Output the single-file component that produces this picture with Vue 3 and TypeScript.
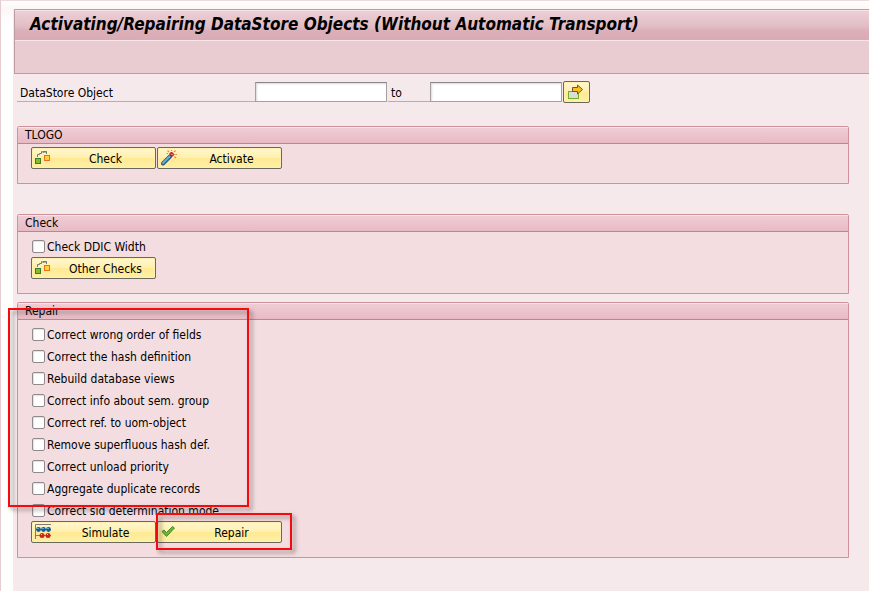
<script setup lang="ts">
import { reactive, ref } from 'vue'

interface Option {
  id: string
  label: string
  checked: boolean
}

const rangeFrom = ref('')
const rangeTo = ref('')
const ddicWidth = ref(false)

const repairs = reactive<Option[]>([
  { id: 'order', label: 'Correct wrong order of fields', checked: false },
  { id: 'hash', label: 'Correct the hash definition', checked: false },
  { id: 'views', label: 'Rebuild database views', checked: false },
  { id: 'sem', label: 'Correct info about sem. group', checked: false },
  { id: 'uom', label: 'Correct ref. to uom-object', checked: false },
  { id: 'superfluous', label: 'Remove superfluous hash def.', checked: false },
  { id: 'unload', label: 'Correct unload priority', checked: false },
  { id: 'duplicates', label: 'Aggregate duplicate records', checked: false },
  { id: 'sid', label: 'Correct sid determination mode', checked: false },
])
</script>

<template>
  <div class="frame">
    <main class="screen">
      <header class="titlebar">
        <h1>Activating/Repairing DataStore Objects (Without Automatic Transport)</h1>
        <div class="toolbar"></div>
      </header>

      <form class="content" @submit.prevent>
        <div class="selection">
          <label class="caption from" for="range-from">DataStore Object</label>
          <input id="range-from" v-model="rangeFrom" class="field" type="text" />
          <label class="caption to" for="range-to">to</label>
          <input id="range-to" v-model="rangeTo" class="field" type="text" />
          <button class="more" type="button" aria-label="Multiple selection">
            <svg width="16" height="16" viewBox="0 0 16 16">
              <rect x="0.5" y="7.5" width="10" height="7" fill="#dcdcdc" stroke="#72b026" />
              <path d="M4.500 3.500v4h5v2.500l5-4.500-5-4.500v2.500z" fill="#fdbf13" stroke="#66583a" />
            </svg>
          </button>
        </div>

        <section class="group tlogo">
          <h2>TLOGO</h2>
          <div class="body">
            <div class="actions">
              <button class="action" type="button">
                <svg width="16" height="16" viewBox="0 0 16 16">
                  <path d="M2.500 7V4.500H4.500V3.500H6.500V1.500L9 2.500M8 1.500H11.500V4M9.500 3L11.500 1" fill="none" stroke="#73777f" />
                  <rect x="0.5" y="8.5" width="5" height="5" fill="#8abb22" stroke="#32803c" />
                  <rect x="9.5" y="5.5" width="5" height="5" fill="#ffd42b" stroke="#ed6d23" />
                </svg>
                <span>Check</span>
              </button>
              <button class="action" type="button">
                <svg width="16" height="16" viewBox="0 0 16 16">
                  <path d="M2 13.500L9 6.500" stroke="#315e7c" stroke-width="4" stroke-linecap="round" />
                  <path d="M2 13L8.500 6.500" stroke="#65acd2" stroke-width="2" stroke-linecap="round" />
                  <path d="M8.500 4l2-2 2.500 2.500-2 2z" fill="#d91c25" stroke="#a32026" />
                  <path d="M10.300 3.800l1 1" stroke="#fff" />
                  <path d="M6.500 .500l1.500 1.500M10.500 0v1M14.500 .500L13 2M14.500 4.500H16M13.500 6.500l1.500 1.500M5.500 3.500H7" stroke="#f58a13" stroke-width="1.200" />
                </svg>
                <span>Activate</span>
              </button>
            </div>
          </div>
        </section>

        <section class="group check">
          <h2>Check</h2>
          <div class="body">
            <label class="option" for="ddic">
              <input id="ddic" v-model="ddicWidth" type="checkbox" /><span>Check DDIC Width</span>
            </label>
            <div class="actions">
              <button class="action" type="button">
                <svg width="16" height="16" viewBox="0 0 16 16">
                  <path d="M2.500 7V4.500H4.500V3.500H6.500V1.500L9 2.500M8 1.500H11.500V4M9.500 3L11.500 1" fill="none" stroke="#73777f" />
                  <rect x="0.5" y="8.5" width="5" height="5" fill="#8abb22" stroke="#32803c" />
                  <rect x="9.5" y="5.5" width="5" height="5" fill="#ffd42b" stroke="#ed6d23" />
                </svg>
                <span>Other Checks</span>
              </button>
            </div>
          </div>
        </section>

        <section class="group repair">
          <h2>Repair</h2>
          <div class="body">
            <label v-for="item in repairs" :key="item.id" class="option" :for="item.id">
              <input :id="item.id" v-model="item.checked" type="checkbox" /><span>{{ item.label }}</span>
            </label>
            <div class="actions">
              <button class="action" type="button">
                <svg width="16" height="16" viewBox="0 0 16 16">
                  <path d="M.500 15V.500H16M1 5.500h15M1 11.500h15" fill="none" stroke="#777b82" />
                  <g fill="#075f9e">
                    <circle cx="3.500" cy="5.500" r="2.400" /><circle cx="8.500" cy="5.500" r="2.400" /><circle cx="13.500" cy="5.500" r="2.400" />
                  </g>
                  <g fill="#c9251e">
                    <circle cx="7" cy="11.500" r="2.500" /><circle cx="13" cy="11.500" r="2.500" />
                  </g>
                  <path d="M2.500 4.500h1M7.500 4.500h1M12.500 4.500h1M6 10.500h1M12 10.500h1" stroke="#d5e7f0" />
                </svg>
                <span>Simulate</span>
              </button>
              <button class="action" type="button">
                <svg width="16" height="16" viewBox="0 0 16 16">
                  <path d="M1 7.500L3 6l2.500 2.500L11.500 2.500l2 1.500-8 8.500z" fill="#72b52b" stroke="#4d8d2b" stroke-linejoin="round" />
                </svg>
                <span>Repair</span>
              </button>
            </div>
          </div>
          <div class="mark options-mark"></div>
          <div class="mark button-mark"></div>
        </section>
      </form>
    </main>
  </div>
</template>

<style>
body {
  background: #f6e9eb;
}
</style>

<style scoped>
.frame,
.frame * {
  box-sizing: border-box;
}

.frame {
  min-height: 100vh;
  padding: 8px 0 0 12px;
  border-top: 1px solid #ecdadd;
  border-left: 1px solid #e4ccd1;
  background: linear-gradient(#fffdfd, #fdf7f7 8px, #fff 24px);
  font-family: "DejaVu Sans Condensed", "Noto Sans", sans-serif;
  font-size: 12px;
  line-height: 16px;
  color: #000;
}

.screen {
  min-height: calc(100vh - 9px);
  padding-left: 1px;
  background: #f6e9eb;
}

.titlebar {
  border: 1px solid #bf9ba3;
  border-right: 0;
}

h1 {
  height: 30px;
  margin: 0;
  padding-left: 15px;
  border-top: 1px solid #f6e3e7;
  background: linear-gradient(#edcfd5, #e2bfc6 50%, #dcaeb7 70%, #d9abb4);
  font-size: 17px;
  font-style: italic;
  font-weight: bold;
  line-height: 26px;
  white-space: nowrap;
}

.toolbar {
  height: 33px;
  border-top: 1px solid #f6e6e9;
  background: #e9cbd2;
}

.content {
  padding: 7px 20px 32px 3px;
}

.selection {
  display: flex;
  align-items: center;
  height: 22px;
}

.caption {
  height: 20px;
  padding-left: 3px;
  border-bottom: 1px solid #b9adb0;
  line-height: 22px;
}

.from {
  width: 238px;
}

.to {
  width: 42px;
  margin-left: 1px;
}

.field {
  width: 132px;
  height: 20px;
  padding: 0 3px;
  border: 1px solid #a5a0a1;
  border-top-color: #8a8586;
  border-radius: 0;
  background: #fff;
  box-shadow: inset 1px 1px 2px #d9d9d9;
  font: inherit;
}

.more,
.action {
  border: 1px solid #6a675c;
  border-radius: 2px;
  background: linear-gradient(#fff7cf, #fff0ad 48%, #fee995 52%, #fff0a5);
  box-shadow: inset 0 0 0 1px #ffefb0;
  color: #000;
  font: inherit;
}

.more {
  display: flex;
  align-items: center;
  width: 27px;
  height: 22px;
  margin-left: 1px;
  padding: 0 0 0 4px;
}

.group {
  position: relative;
  border: 1px solid #cf919c;
  border-radius: 2px 2px 0 0;
  background: #f4dde0;
}

.tlogo {
  margin-top: 23px;
}

.check {
  margin-top: 30px;
}

.repair {
  margin-top: 8px;
}

h2 {
  height: 17px;
  margin: 0;
  padding-left: 7px;
  border-top: 1px solid #f8e5e9;
  border-bottom: 1px solid #c4828e;
  background: linear-gradient(#efcdd4, #e8bac4);
  font-size: 12px;
  font-weight: normal;
  line-height: 15px;
}

.body {
  padding: 3px 13px 14px;
}

.option {
  display: flex;
  align-items: center;
  gap: 2px;
  width: max-content;
  height: 22px;
  padding-left: 1px;
}

.option span {
  padding-top: 2px;
}

.option input {
  appearance: none;
  width: 13px;
  height: 13px;
  margin: 0;
  border: 1px solid #8f8a8b;
  border-radius: 2px;
  background: #fff;
  box-shadow: inset 1px 1px 1px #e2e2e2;
}

.option input:checked {
  background: #555;
}

.actions {
  display: flex;
  gap: 1px;
}

.action {
  display: flex;
  align-items: center;
  width: 125px;
  height: 22px;
  padding: 0 8px 0 3px;
}

.action svg {
  flex: none;
  align-self: flex-start;
  margin-top: 2px;
}

.action span {
  flex: 1;
  padding: 2px 0 0 13px;
  text-align: center;
  white-space: nowrap;
}

.mark {
  position: absolute;
  border: 2px solid #f50a0e;
  filter: drop-shadow(3px 3px 2px rgb(60 50 50 / 55%));
  pointer-events: none;
}

.options-mark {
  top: 5px;
  left: -10px;
  width: 241px;
  height: 199px;
}

.button-mark {
  top: 210px;
  left: 138px;
  width: 136px;
  height: 37px;
}
</style>
